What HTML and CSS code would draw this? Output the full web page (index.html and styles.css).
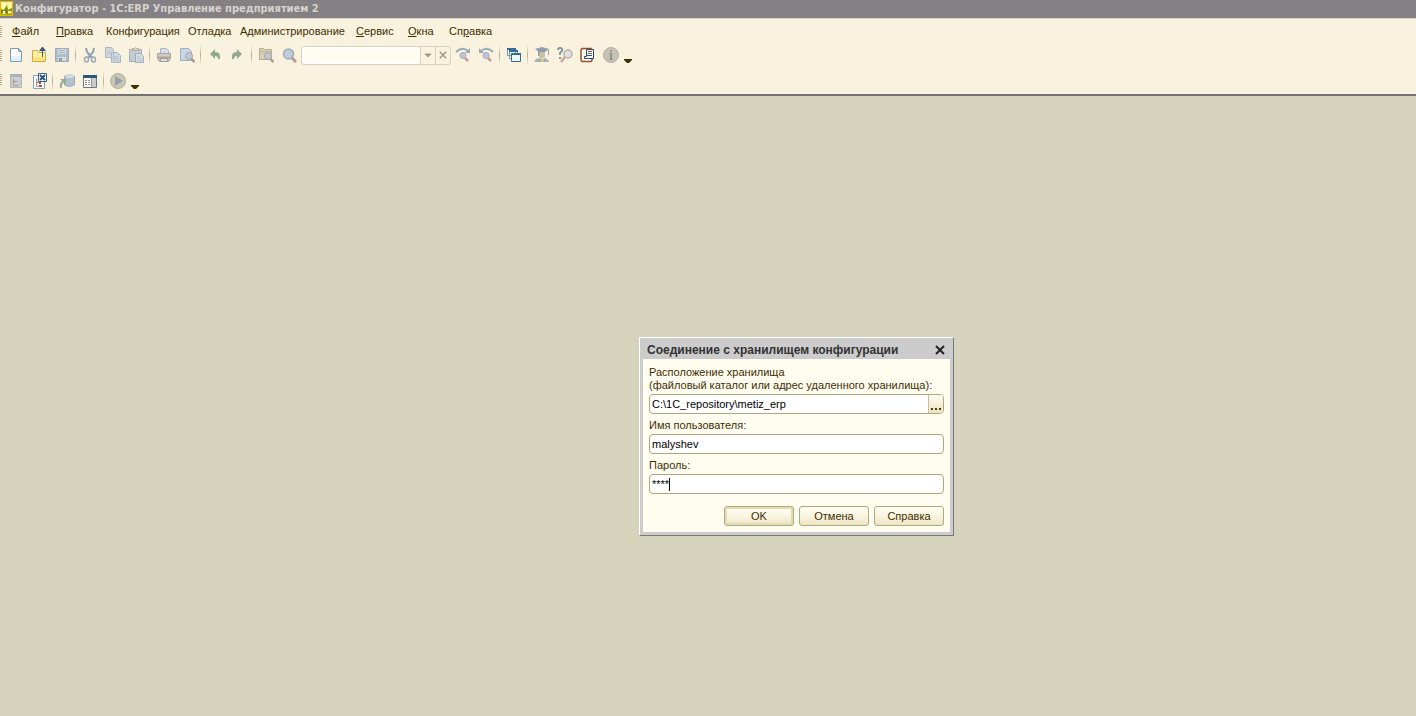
FILE: index.html
```html
<!DOCTYPE html>
<html lang="ru">
<head>
<meta charset="utf-8">
<title>Конфигуратор - 1C:ERP Управление предприятием 2</title>
<link rel="stylesheet" href="styles.css">
</head>
<body>
<header class="titlebar">
  <svg class="app-icon" width="14" height="16" viewBox="0 0 14 16"><path fill="#e0b800" d="M0 0h13v15H0z"/><path fill="#fff27a" d="M1 1h11v8H1z"/><path fill="#fffbd0" d="M2 2h4v4H2zM9 2h2v4H9z"/><path fill="#7c8a10" d="M1 8l3 1 3-5 1 5 4-2v2l-5 4-3-2-3 2z"/><path fill="#fff" d="M3 10h2v3H3zM8 10h3v2H8z"/><path fill="#a8b800" d="M1 13h11v1H1z"/></svg>
  <h1 class="app-title">Конфигуратор - 1C:ERP Управление предприятием 2</h1>
</header>
<div class="chrome">
  <nav class="menu grip">
    <button class="menu-item"><u>Ф</u>айл</button>
    <button class="menu-item"><u>П</u>равка</button>
    <button class="menu-item">Конфигурация</button>
    <button class="menu-item">Отладка</button>
    <button class="menu-item">Администрирование</button>
    <button class="menu-item"><u>С</u>ервис</button>
    <button class="menu-item"><u>О</u>кна</button>
    <button class="menu-item">Сп<u>р</u>авка</button>
  </nav>
  <div class="toolbar grip">
    <button class="tool" aria-label="Новый"><svg viewBox="0 0 16 16"><path fill="#fff" stroke="#7b9cbd" d="M2.500 1.500h8l3 3v10h-11z"/><path fill="#e6f0f9" d="M3 9h10v5H3z"/><path fill="#b4cce2" stroke="#7b9cbd" d="M10.500 1.500v3h3z"/></svg></button>
    <button class="tool" aria-label="Открыть"><svg viewBox="0 0 16 16"><path fill="#fff0a8" stroke="#d2a848" d="M1.500 14.500v-11h5l1 2h7v9z"/><path fill="#ffe27a" d="M2 10h12v4H2z"/><path fill="none" stroke="#35587c" d="M11.500 10V1"/><path fill="#35587c" d="M11 0h1l3 4H8z"/></svg></button>
    <button class="tool" aria-label="Сохранить"><svg viewBox="0 0 16 16"><path fill="#b1bdc8" stroke="#9faab6" d="M1.500 1.500h13v13h-13z"/><path fill="#d5dce0" d="M4 2h8v5H4zM4 10h8v4H4z"/><path stroke="#a5b3c0" d="M5 3.500h6M5 5.500h6"/><path fill="#8f9bab" d="M5 11h3v3H5z"/></svg></button>
    <span class="sep"></span>
    <button class="tool" aria-label="Вырезать"><svg viewBox="0 0 16 16"><path fill="none" stroke="#8da3b8" stroke-width="2" d="M4 1l1 4 5 6M12 1l-1 4-5 6"/><ellipse cx="4.500" cy="12.500" rx="2" ry="2.500" fill="none" stroke="#9ca8b5" stroke-width="1.500"/><ellipse cx="11.500" cy="12.500" rx="2" ry="2.500" fill="none" stroke="#9ca8b5" stroke-width="1.500"/></svg></button>
    <button class="tool" aria-label="Копировать"><svg viewBox="0 0 16 16"><path fill="#d0d8df" stroke="#a8b6c6" d="M.5.5h6l2 3v7h-8zM6.500 5.500h6l3 3v7h-9z"/><path stroke="#b7c2cf" d="M2 4.500h4M2 6.500h4M8 9.500h5M8 11.500h6M8 13.500h6"/></svg></button>
    <button class="tool" aria-label="Вставить"><svg viewBox="0 0 16 16"><path fill="#c3cbd3" stroke="#a5afbd" d="M1.500 2.500h12v12h-12z"/><path fill="#d9d1b9" stroke="#b8ae98" d="M4.500 3.500V1.500h2L7.500.5l1 1h2v2z"/><path fill="#d5dde3" stroke="#9caec1" d="M7.500 6.500h5l3 3v6h-8z"/><path stroke="#b5c2cf" d="M9 9.500h3M9 11.500h5M9 13.500h5"/></svg></button>
    <span class="sep"></span>
    <button class="tool" aria-label="Печать"><svg viewBox="0 0 16 16"><path fill="#d7e0e8" stroke="#a3b6ca" d="M4.500 1.500h6l2 2v4h-8z"/><path fill="#c3bbb1" stroke="#a9a29c" d="M1.500 6.500h13v5l-2 3h-9l-2-3z"/><path fill="#d0cbc0" d="M2 7h12v2H2z"/><path stroke="#c09c8e" d="M2 10.500h12"/><path fill="#dce1e1" stroke="#a09d9d" d="M4.500 11.500h7v3h-7z"/></svg></button>
    <button class="tool" aria-label="Просмотр"><svg viewBox="0 0 16 16"><path fill="#cbd7e2" stroke="#9bb1c8" d="M1.500 1.500h8l3 3v9h-11z"/><circle cx="10" cy="9" r="3.500" fill="#bacbdb" stroke="#b39f9d"/><path stroke="#b3948c" stroke-width="2.500" d="M12.500 12l3 3"/></svg></button>
    <span class="sep"></span>
    <button class="tool" aria-label="Отменить"><svg viewBox="0 0 16 16"><path fill="#93aa91" d="M3 7l5-5v3q5 0 5 4v3h-2q0-3-3-3v3z"/></svg></button>
    <button class="tool" aria-label="Повторить"><svg viewBox="0 0 16 16"><path fill="#93aa91" d="M12 7L7 2v3q-5 0-5 4v3h2q0-3 3-3v3z"/></svg></button>
    <span class="sep"></span>
    <button class="tool" aria-label="Глобальный поиск"><svg viewBox="0 0 16 16"><path fill="#d5cfb3" stroke="#b5af96" d="M1.500 12.500v-11h4l1 1h7v10z"/><path stroke="#c2bca2" d="M2 4.500h11"/><circle cx="10" cy="9" r="3.500" fill="#c1cbd1" stroke="#b39f9d"/><path stroke="#b99b93" stroke-width="2.500" d="M12.500 12l3 3"/></svg></button>
    <button class="tool" aria-label="Найти"><svg viewBox="0 0 16 16"><circle cx="7.500" cy="7" r="5" fill="#bccddf" stroke="#a8a8b0" stroke-width="1.500"/><path stroke="#b99b93" stroke-width="3" d="M11 11l4 4"/></svg></button>
    <div class="search">
      <input class="search-text" type="text" aria-label="Поиск">
      <button class="search-btn" aria-label="Список"><svg viewBox="0 0 10 10"><path fill="#a39a80" d="M1 3h8v1L5 8 1 4z"/></svg></button>
      <button class="search-btn" aria-label="Очистить"><svg viewBox="0 0 10 10"><path stroke="#a39a80" stroke-width="2" d="M1 1l8 8M9 1L1 9"/></svg></button>
    </div>
    <button class="tool" aria-label="Найти следующий"><svg viewBox="0 0 16 16"><path fill="none" stroke="#96abba" stroke-width="2" d="M1 5q6-6 12-1"/><path fill="#96abba" d="M15 1v5h-5z"/><circle cx="8" cy="8.500" r="3" fill="#b5c9dc" stroke="#b8a6a4"/><path stroke="#bd9f9a" stroke-width="2.500" d="M10 11l3 3"/></svg></button>
    <button class="tool" aria-label="Найти предыдущий"><svg viewBox="0 0 16 16"><path fill="none" stroke="#96abba" stroke-width="2" d="M15 5Q9-1 3 4"/><path fill="#96abba" d="M1 1v5h5z"/><circle cx="8" cy="8.500" r="3" fill="#b5c9dc" stroke="#b8a6a4"/><path stroke="#bd9f9a" stroke-width="2.500" d="M10 11l3 3"/></svg></button>
    <span class="sep"></span>
    <button class="tool" aria-label="Окна"><svg viewBox="0 0 16 16"><path fill="#fff" stroke="#6d98bf" d="M1.500 1.500h8v7h-8zM3.500 3.500h8v8h-8z"/><path fill="#eef5fb" stroke="#356a98" d="M5.500 6.500h9v8h-9z"/><path stroke="#356a98" stroke-width="2" d="M1 2h9M3 4h9M5 7h10"/></svg></button>
    <span class="sep"></span>
    <button class="tool" aria-label="Синтакс-помощник"><svg viewBox="0 0 16 16"><path fill="#cdbfa6" d="M5 5h6v5l-3 2-3-2z"/><path fill="#8f9fab" d="M1 2l7-2 7 2-4 3H5zM4 4h2l-1 5H4zM14 3h1v5h-1z"/><path fill="#a3b1b0" d="M0 15l2-3 4-1 2 2 3-2 3 2 1 2z"/><path fill="#c7c69b" d="M7 12h3v3H7z"/></svg></button>
    <button class="tool" aria-label="Поиск в справке"><svg viewBox="0 0 16 16"><path fill="none" stroke="#8499a8" stroke-width="2" d="M1 3q0-2 2-2 3 0 2 3L3 6v2M3 10v2"/><circle cx="11" cy="7" r="4" fill="#dce2df" stroke="#b8b0a9" stroke-width="1.500"/><path stroke="#c5a99a" stroke-width="2.500" d="M8 10l-4 5"/></svg></button>
    <button class="tool" aria-label="Содержание справки"><svg viewBox="0 0 16 16"><path fill="#fff8ec" stroke="#94522d" stroke-width="1.500" d="M2 1.500h9l1 1v11l-1 1H2L1 13V3z"/><path fill="#fff" stroke="#284b74" d="M6.500 2.500h7v9h-9v-2h2z"/><path stroke="#c62e28" d="M8 4.500h4"/><path stroke="#2b8748" d="M8 6.500h4"/><path stroke="#284b9a" d="M7 8.500h5"/></svg></button>
    <button class="tool" aria-label="О программе"><svg viewBox="0 0 16 16"><circle cx="8" cy="8" r="7.500" fill="#c9c1b4" stroke="#b5ada2"/><path fill="#8a9c80" d="M7 3h2v2H7zM6 6h3v6h1v1H6v-1h1V7H6z"/></svg></button>
    <button class="more" aria-label="Ещё"><svg viewBox="0 0 8 4"><path fill="#3f2f00" d="M0 0h8v1L5 4H3L0 1z"/></svg></button>
  </div>
  <div class="toolbar toolbar-last grip">
    <button class="tool" aria-label="Открыть конфигурацию"><svg viewBox="0 0 16 16"><path fill="#c9cdcd" stroke="#b0b7bd" d="M2.500 1.500h11v13h-11z"/><path fill="#a9b2bb" d="M2 1h12v3H2z"/><path fill="none" stroke="#b49a90" d="M5.500 6v6.500h5M6 8.500h3"/></svg></button>
    <button class="tool" aria-label="Закрыть конфигурацию"><svg viewBox="0 0 16 16"><path fill="#fff" stroke="#829fb9" d="M2.500 2.500h11v13h-11z"/><path fill="none" stroke="#b5897c" d="M5.500 6v7.500h2M6 9.500h2"/><path fill="#9b5b49" d="M8 9h2v2H8zM8 12h3v2H8z"/><path fill="#fff" stroke="#31608b" d="M7.500.5h8v8h-8z"/><path stroke="#25537c" stroke-width="2" d="M9 2l5 5M14 2L9 7"/></svg></button>
    <span class="sep"></span>
    <button class="tool" aria-label="Обновить базу данных"><svg viewBox="0 0 16 16"><path fill="#b3c3ce" stroke="#9badbb" d="M5.500 3v9q5 3 10 0V3q-5-3-10 0z"/><ellipse cx="10.500" cy="3" rx="4.500" ry="2" fill="#d2dce0"/><path fill="none" stroke="#9baf90" stroke-width="2" d="M2 15q-1-5 3-7"/><path fill="#9baf90" d="M1 6h6v6z"/></svg></button>
    <button class="tool" aria-label="Панель"><svg viewBox="0 0 16 16"><path fill="#fff" stroke="#607b91" d="M1.500 2.500h13v12h-13z"/><path fill="#285780" d="M1 2h14v3H1z"/><path fill="#cbcdc8" d="M10 5h4v9h-4z"/><path stroke="#8d9ba7" d="M9.500 5v9"/><path stroke="#c17b59" d="M3 7.500h2M3 9.500h2M3 11.500h2"/><path stroke="#8f9ba5" d="M6 7.500h2M6 9.500h2M6 11.500h2"/></svg></button>
    <span class="sep"></span>
    <button class="tool" aria-label="Начать отладку"><svg viewBox="0 0 16 16"><circle cx="8" cy="8" r="7.500" fill="#cbc6b4" stroke="#b3ad9c"/><path fill="#91a2aa" d="M5 3l8 5-8 5z"/></svg></button>
    <button class="more" aria-label="Ещё"><svg viewBox="0 0 8 4"><path fill="#3f2f00" d="M0 0h8v1L5 4H3L0 1z"/></svg></button>
  </div>
</div>
<main class="workspace">
  <form class="dialog" role="dialog" aria-labelledby="dlg-title">
    <div class="dialog-head">
      <h2 class="dialog-title" id="dlg-title">Соединение с хранилищем конфигурации</h2>
      <button class="close" type="button" aria-label="Закрыть"><svg viewBox="0 0 10 10"><path stroke="#222" stroke-width="2" d="M1 1l8 8M9 1L1 9"/></svg></button>
    </div>
    <div class="dialog-body">
      <label class="label" for="path">Расположение хранилища<br>(файловый каталог или адрес удаленного хранилища):</label>
      <div class="field">
        <input class="field-text" id="path" type="text" value="C:\1C_repository\metiz_erp">
        <button class="browse" type="button" aria-label="Выбрать"><svg viewBox="0 0 10 2"><path fill="#4a3800" d="M0 0h2v2H0zM4 0h2v2H4zM8 0h2v2H8z"/></svg></button>
      </div>
      <label class="label" for="user">Имя пользователя:</label>
      <div class="field"><input class="field-text" id="user" type="text" value="malyshev"></div>
      <label class="label" for="pass">Пароль:</label>
      <div class="field password"><input class="field-text" id="pass" type="text" value="****"><span class="caret"></span></div>
      <div class="actions">
        <button class="btn btn-default" type="button">OK</button>
        <button class="btn" type="button">Отмена</button>
        <button class="btn" type="button">Справка</button>
      </div>
    </div>
  </form>
</main>
</body>
</html>
```

FILE: styles.css
```css
* { box-sizing: border-box; }

body {
  margin: 0;
  min-height: 100vh;
  display: flex;
  flex-direction: column;
  font: 11px/13px "Liberation Sans", Arial, sans-serif;
  color: #3f2f00;
  background: #d5d3bc;
}

button, input {
  font: inherit;
  color: inherit;
  margin: 0;
  padding: 0;
  border: 0;
  background: none;
  outline: 0;
}

svg { display: block; }

.titlebar {
  display: flex;
  align-items: center;
  gap: 1px;
  height: 19px;
  background: #848084;
  border-bottom: 1px solid #d6d3ce;
}

.app-title {
  margin: 0;
  font: bold 11px/16px "DejaVu Sans Condensed", "DejaVu Sans", sans-serif;
  color: #d6d3ce;
  white-space: nowrap;
}

.chrome {
  background: #f8f2de;
  border-bottom: 2px solid #747272;
}

.grip {
  position: relative;
}

.grip::before {
  content: "";
  position: absolute;
  left: 0;
  top: 7px;
  width: 2px;
  height: 12px;
  background: repeating-linear-gradient(#b8ae8c 0 1px, transparent 1px 2px);
}

.menu {
  display: grid;
  grid-template-columns: 44px 50px 82px 52px 116px 52px 41px auto;
  height: 24px;
  padding-left: 12px;
}

.menu-item {
  text-align: left;
  white-space: nowrap;
}

.toolbar {
  display: flex;
  align-items: center;
  height: 24px;
  padding-left: 4px;
}

.toolbar-last { height: 27px; }

.tool {
  display: grid;
  place-items: center;
  flex: none;
  width: 23px;
  height: 22px;
}

.tool svg {
  width: 16px;
  height: 16px;
}

.sep {
  flex: none;
  width: 5px;
  height: 20px;
  background: linear-gradient(#f8f2de, #b9b18c, #f8f2de) 2px 0 / 1px 100% no-repeat;
}

.more {
  display: grid;
  place-items: end center;
  width: 12px;
  height: 16px;
}

.more svg {
  width: 8px;
  height: 4px;
}

.search {
  display: flex;
  width: 150px;
  height: 19px;
  margin-left: 1px;
  border: 1px solid #d8d1bb;
  border-radius: 3px;
}

.search-text {
  flex: 1;
  min-width: 0;
  background: #fffcf0;
  border: 2px solid #fff;
  border-radius: 3px;
}

.search-btn {
  display: grid;
  place-items: center;
  width: 15px;
  border-left: 1px solid #d8d1bb;
}

.search-btn svg {
  width: 8px;
  height: 8px;
}

.workspace {
  position: relative;
  flex: 1;
}

.dialog {
  position: absolute;
  left: 639px;
  top: 241px;
  width: 315px;
  border: 1px solid #fff;
  border-right-color: #777;
  border-bottom-color: #777;
  background: #ccc;
  padding: 0 3px 3px;
}

.dialog-head {
  display: flex;
  align-items: center;
  justify-content: space-between;
  height: 21px;
  padding: 2px 5px 0 4px;
}

.dialog-title {
  margin: 0;
  font: bold 12px/16px "Liberation Sans", Arial, sans-serif;
  color: #333;
  white-space: nowrap;
}

.close svg {
  width: 10px;
  height: 10px;
}

.dialog-body {
  padding: 7px 6px 6px;
  background: #fffcf0;
}

.label {
  display: block;
  white-space: nowrap;
}

.field {
  display: flex;
  align-items: center;
  height: 20px;
  margin: 2px 0 5px;
  padding-left: 2px;
  border: 1px solid #b3a878;
  border-radius: 4px;
  background: #fff;
  color: #000;
}

.field-text {
  flex: 1;
  min-width: 0;
}

.password { position: relative; }

.caret {
  position: absolute;
  left: 19px;
  top: 3px;
  width: 1px;
  height: 13px;
  background: #000;
}

.browse {
  display: grid;
  place-items: end center;
  align-self: stretch;
  width: 15px;
  padding-bottom: 3px;
  border-left: 1px solid #c9c09a;
  border-radius: 0 3px 3px 0;
  background: linear-gradient(#fffdf3, #ece3c2);
}

.browse svg {
  width: 10px;
  height: 2px;
}

.actions {
  display: flex;
  justify-content: flex-end;
  gap: 5px;
  margin-top: 12px;
}

.btn {
  width: 70px;
  height: 20px;
  border: 1px solid #b3a878;
  border-radius: 3px;
  background: linear-gradient(#fffdf4, #f9f4e0 50%, #ece4c6);
}

.btn-default {
  box-shadow: inset 0 0 0 2px #e3dab6;
}
```
